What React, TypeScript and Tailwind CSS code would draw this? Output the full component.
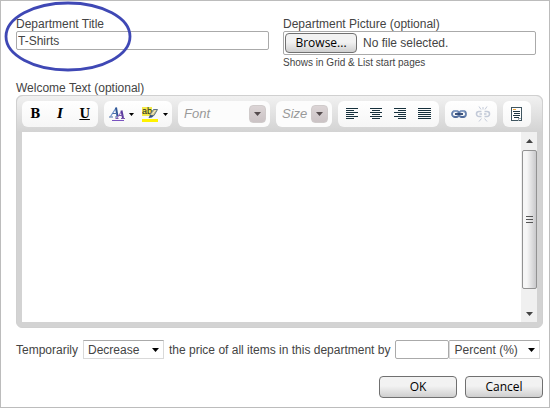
import React, { useRef, useState } from 'react';

const LINES = {
  left: [[0, 12], [0, 8], [0, 12], [0, 8], [0, 12], [0, 8]],
  center: [[0, 12], [2, 8], [0, 12], [2, 8], [0, 12], [2, 8]],
  right: [[0, 12], [4, 8], [0, 12], [4, 8], [0, 12], [4, 8]],
  justify: [[0, 13], [0, 13], [0, 13], [0, 13], [0, 13], [0, 13]],
};

const AlignIcon: React.FC<{ kind: keyof typeof LINES }> = ({ kind }) => (
  <svg width="13" height="12" viewBox="0 0 13 12" shapeRendering="crispEdges" fill="#16303c">
    {LINES[kind].map(([x, w], i) => (
      <rect key={i} x={x} y={i * 2} width={w} height="1" />
    ))}
  </svg>
);

const Arrow: React.FC<{ className?: string }> = ({ className }) => (
  <svg className={className} width="7" height="4" viewBox="0 0 7 4" fill="currentColor">
    <path d="M0 0h7L3.500 4z" />
  </svg>
);

const FontColorIcon = () => (
  <svg width="16" height="16" viewBox="0 0 16 16" fill="none">
    <path d="M1.500 10.500 7 2" stroke="#6d93c9" strokeWidth="1.200" />
    <path d="M7 1.500 8.500 10.500" stroke="#2f5596" strokeWidth="2" />
    <path d="M3.500 7.500h4.500M0 11h4M6 11h3" stroke="#4a6ea8" />
    <path d="M8 12 12.500 5.500" stroke="#9a7cc6" strokeWidth="1.200" />
    <path d="M12.500 4.500 14 12" stroke="#5a3a9c" strokeWidth="2" />
    <path d="M9.500 9.500h4M6.500 12.500h3M12 12.500h4" stroke="#7a54ac" />
    <path d="M3 14.500h12" stroke="#7a54c0" />
  </svg>
);

const HighlightIcon = () => (
  <svg width="17" height="17" viewBox="0 0 17 17">
    <rect y="1" width="10" height="9" fill="#f3ea4a" />
    <rect y="13" width="16" height="3" fill="#fff200" />
    <text x="0" y="8" fontSize="9" fontFamily="Liberation Sans, sans-serif" fill="#222">ab</text>
    <path d="M8 8.500 11.500 3.500h4L12 9.500l-3 1z" fill="#d3c78c" stroke="#5d7388" />
    <path d="M10 8.500 13.500 4" stroke="#f4efcf" />
    <path d="M6.500 12l1.500-3 3.500.5-1.500 2z" fill="#34507c" />
  </svg>
);

const LinkIcon = () => (
  <svg width="16" height="10" viewBox="0 0 16 10" fill="none">
    <rect x="1" y="2" width="7" height="6" rx="3" stroke="#6580ad" strokeWidth="1.800" />
    <rect x="8" y="2" width="7" height="6" rx="3" stroke="#6580ad" strokeWidth="1.800" />
    <path d="M4 5h8" stroke="#2c4472" strokeWidth="1.800" />
    <path d="M2.500 8h4M9.500 8h4" stroke="#3c5686" />
    <path d="M2.500 2h4M9.500 2h4" stroke="#a9bbd9" />
  </svg>
);

const UnlinkIcon = () => (
  <svg width="16" height="16" viewBox="0 0 16 16" fill="none" stroke="#c3cad8">
    <path d="M6.500 5.500H4a2.500 2.500 0 0 0 0 5h2.500M4.500 8h2.500" strokeWidth="1.600" />
    <path d="M9.500 5.500H12a2.500 2.500 0 0 1 0 5H9.500M9 8h2.500" strokeWidth="1.600" />
    <path d="M8 1v2.500M4 .5 6 3.500M12 .5 10 3.500M6.500 12.500 4 15.500M9.500 12.500l2.500 3" />
  </svg>
);

const SourceIcon = () => (
  <svg width="12" height="15" viewBox="0 0 12 15" fill="none" shapeRendering="crispEdges">
    <path d="M.5.500h10v13H.5z" fill="#fff" stroke="#3f5560" />
    <path d="M2 2.500h3" stroke="#eaa23c" />
    <path d="M2 4.500h7M3 6.500h6M2 8.500h7M3 10.500h5" stroke="#1f3743" />
    <path d="M7 13.500v-2h3" stroke="#9aa7ae" />
  </svg>
);

const Group: React.FC<{ className: string; children: React.ReactNode }> = ({ className, children }) => (
  <div className={`flex h-[26px] shrink-0 items-center rounded-md bg-linear-to-b from-white to-[#f6f6f6] ${className}`}>
    {children}
  </div>
);

const Tool: React.FC<{ label: string; className?: string; children: React.ReactNode }> = ({
  label,
  className = 'w-6',
  children,
}) => (
  <button type="button" aria-label={label} className={`flex h-6 items-center justify-center ${className}`}>
    {children}
  </button>
);

const ToolbarSelect: React.FC<{ label: string; className: string }> = ({ label, className }) => (
  <div className={`relative flex h-[26px] shrink-0 items-center rounded-md bg-[#fcfcfc] ${className}`}>
    <select aria-label={label} className="h-full w-full appearance-none pl-1.5 text-[13px] text-[#999] italic">
      <option>{label}</option>
    </select>
    <span className="pointer-events-none absolute top-1 right-1 flex h-[18px] w-[17px] items-center justify-center rounded-sm border border-[#d0cbcb] bg-linear-to-b from-[#dcd5d6] to-[#cbc3c5]">
      <Arrow className="text-[#554c4e]" />
    </span>
  </div>
);

const InlineSelect: React.FC<{ label: string; options: string[]; className: string }> = ({
  label,
  options,
  className,
}) => (
  <div className={`relative flex items-center ${className}`}>
    <select
      aria-label={label}
      className="h-[19px] w-full appearance-none border border-[#d9d9d9] border-t-[#aaa] bg-white pl-1"
    >
      {options.map((option) => (
        <option key={option}>{option}</option>
      ))}
    </select>
    <Arrow className="pointer-events-none absolute right-[5px] text-black" />
  </div>
);

const BUTTON =
  'rounded-sm border border-[#707070] bg-linear-to-b from-[#f2f2f2] from-45% to-[#cfcfcf] font-["Open_Sans",sans-serif] text-xs text-black';

const LETTER = "font-['DejaVu_Serif',serif] text-xs font-bold";

export default function App() {
  const [title, setTitle] = useState('T-Shirts');
  const [fileName, setFileName] = useState('');
  const fileRef = useRef<HTMLInputElement>(null);

  return (
    <form className='relative min-h-screen border border-[#bcbcbc] bg-white pt-4 pr-1.5 pb-[9px] pl-[15px] font-["Liberation_Sans",Arial,sans-serif] text-xs text-[#444]'>
      <div className="grid h-16 grid-cols-2 gap-3.5 pr-[7px]">
        <div>
          <label htmlFor="title" className="block h-3.5 leading-[14px]">
            Department Title
          </label>
          <input
            id="title"
            value={title}
            onChange={(e) => setTitle(e.target.value)}
            className="block h-[19px] w-full rounded-xs border border-[#aaa] px-px"
          />
        </div>
        <div>
          <label htmlFor="picture" className="block h-3.5 leading-[14px]">
            Department Picture (optional)
          </label>
          <div className="flex h-6 items-center gap-1.5 rounded-xs border border-[#aaa] px-px">
            <button type="button" onClick={() => fileRef.current?.click()} className={`h-5 w-[72px] ${BUTTON}`}>
              Browse...
            </button>
            <span>{fileName || 'No file selected.'}</span>
            <input
              ref={fileRef}
              id="picture"
              type="file"
              className="hidden"
              onChange={(e) => setFileName(e.target.files?.[0]?.name ?? '')}
            />
          </div>
          <p className="text-[10px] leading-4">Shows in Grid &amp; List start pages</p>
        </div>
      </div>

      <label htmlFor="welcome" className="block h-3.5 leading-[14px]">
        Welcome Text (optional)
      </label>
      <div className="rounded-md border border-[#d0d0d0] bg-[#d3d3d3]">
        <div className="flex h-9 items-center gap-1.5 rounded-t-md bg-linear-to-b from-[#f1f1f1] to-[#d3d3d3] px-[5px] text-black">
          <Group className="w-[76px] justify-around px-px">
            <Tool label="Bold"><span className={LETTER}>B</span></Tool>
            <Tool label="Italic"><span className={`${LETTER} italic`}>I</span></Tool>
            <Tool label="Underline"><span className={`${LETTER} underline`}>U</span></Tool>
          </Group>
          <Group className="w-[68px] justify-around px-px">
            <Tool label="Font Color" className="w-8 gap-1">
              <FontColorIcon />
              <Arrow className="h-[3px] w-[5px]" />
            </Tool>
            <Tool label="Highlight" className="w-8 gap-1">
              <HighlightIcon />
              <Arrow className="h-[3px] w-[5px]" />
            </Tool>
          </Group>
          <ToolbarSelect label="Font" className="w-[92px]" />
          <ToolbarSelect label="Size" className="w-14" />
          <Group className="w-[101px] justify-around px-0.5">
            <Tool label="Align Left"><AlignIcon kind="left" /></Tool>
            <Tool label="Center"><AlignIcon kind="center" /></Tool>
            <Tool label="Align Right"><AlignIcon kind="right" /></Tool>
            <Tool label="Justify"><AlignIcon kind="justify" /></Tool>
          </Group>
          <Group className="w-[52px] justify-around px-0.5">
            <Tool label="Insert Link"><LinkIcon /></Tool>
            <Tool label="Remove Link"><UnlinkIcon /></Tool>
          </Group>
          <Group className="w-7 justify-center">
            <Tool label="Source"><SourceIcon /></Tool>
          </Group>
        </div>
        <div className="mx-[5px] mb-[5px] flex h-[190px] bg-white">
          <textarea id="welcome" className="min-w-0 grow resize-none overflow-hidden p-2 outline-none" />
          <div className="flex w-4 flex-col items-center bg-[#f0f0f0] text-[#444]">
            <div className="flex h-[18px] items-center">
              <Arrow className="rotate-180" />
            </div>
            <div className="flex h-[139px] w-[15px] flex-col items-center justify-center gap-0.5 rounded-xs border border-[#929292] bg-linear-to-r from-[#f6f6f6] from-30% to-[#c9c9cb]">
              <span className="h-px w-[7px] bg-[#555]" />
              <span className="h-px w-[7px] bg-[#555]" />
              <span className="h-px w-[7px] bg-[#555]" />
            </div>
            <div className="mt-auto flex h-4 items-center">
              <Arrow />
            </div>
          </div>
        </div>
      </div>

      <div className="mt-3 flex items-center whitespace-nowrap">
        <span>Temporarily</span>
        <InlineSelect label="Change" options={['Decrease', 'Increase']} className="mx-[5px] w-[81px]" />
        <span>the price of all items in this department by</span>
        <input aria-label="Amount" className="ml-[5px] h-[19px] w-[54px] rounded-xs border border-[#aaa] px-1" />
        <InlineSelect label="Unit" options={['Percent (%)', 'Dollars ($)']} className="w-[91px]" />
      </div>

      <div className="mt-[17px] flex justify-end gap-2">
        <button type="submit" className={`h-[22px] w-[78px] ${BUTTON}`}>OK</button>
        <button type="button" className={`h-[22px] w-[78px] ${BUTTON}`}>Cancel</button>
      </div>

      <svg
        className="pointer-events-none absolute top-0 left-[3px]"
        width="128"
        height="72"
        viewBox="0 0 128 72"
        fill="none"
      >
        <ellipse cx="64" cy="35.500" rx="62" ry="33.500" stroke="#3f48b5" strokeWidth="2.800" />
      </svg>
    </form>
  );
}
